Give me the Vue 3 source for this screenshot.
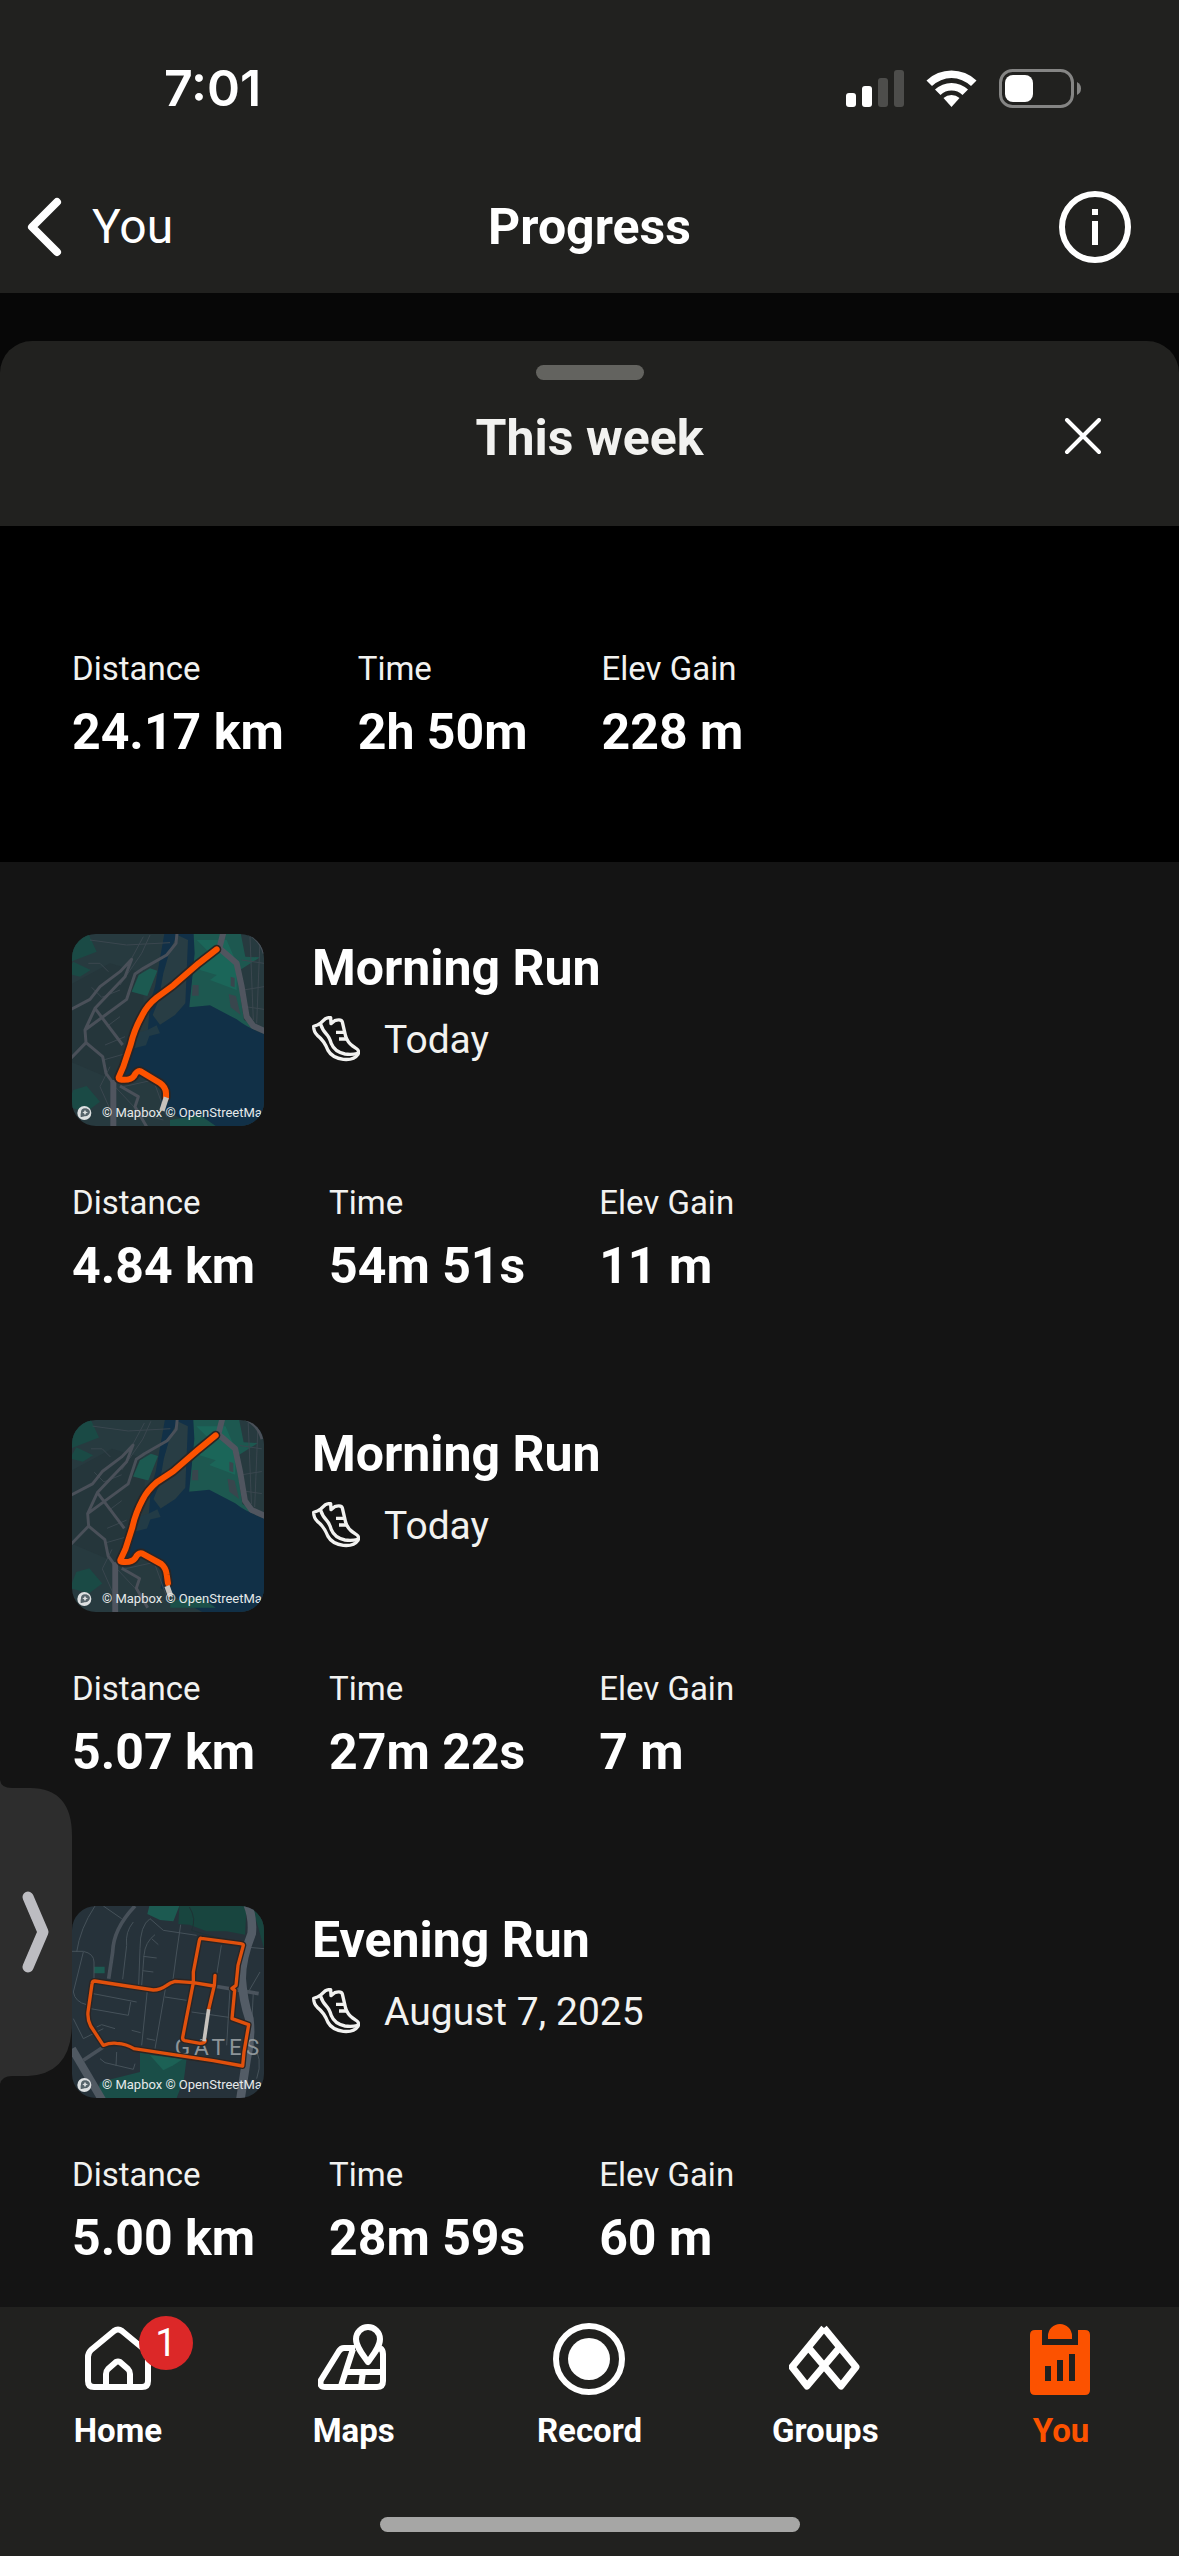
<script setup>
const summary = [
  { label: 'Distance', value: '24.17 km' },
  { label: 'Time', value: '2h 50m' },
  { label: 'Elev Gain', value: '228 m' }
]

const activities = [
  {
    id: 1,
    title: 'Morning Run',
    date: 'Today',
    map: 'lake',
    base: '',
    route: 'M470 88 L416 130 L340 196 L290 233 Q262 255 246 287 Q222 330 212 374 L190 440 L176 472 Q175 479 184 479 Q212 482 222 468 Q232 450 242 454 L300 489 Q318 502 318 520 V532',
    tail: 'M319 532 L306 572',
    stats: [
      { label: 'Distance', value: '4.84 km' },
      { label: 'Time', value: '54m 51s' },
      { label: 'Elev Gain', value: '11 m' }
    ]
  },
  {
    id: 2,
    title: 'Morning Run',
    date: 'Today',
    map: 'lake',
    base: 'translate(10 2) scale(.973)',
    route: 'M467 88 L416 130 L340 196 L290 229 Q262 253 248 281 Q226 322 217 364 L196 430 L181 462 Q180 468 190 468 Q216 470 226 456 Q234 439 246 442 L304 474 Q318 486 320 505 L324 532',
    tail: 'M321 540 L332 570',
    stats: [
      { label: 'Distance', value: '5.07 km' },
      { label: 'Time', value: '27m 22s' },
      { label: 'Elev Gain', value: '7 m' }
    ]
  },
  {
    id: 3,
    title: 'Evening Run',
    date: 'August 7, 2025',
    map: 'town',
    base: '',
    route: 'M465 250 L463 280 L446 352 M461 282 L400 272 L345 268 Q330 272 320 280 Q300 294 280 294 L200 282 L104 267 Q97 267 96 276 L84 360 Q82 384 92 402 L130 460 Q150 452 170 454 Q200 456 222 470 L340 488 L460 506 L548 522 L552 480 L566 398 L516 380 L524 295 L516 289 L528 280 L534 220 L550 160 Q550 156 542 155 L424 139 Q420 138 418 146 L400 240 L400 272 L368 436 Q367 444 374 446 L420 454 Q434 454 436 446',
    tail: 'M446 352 L432 448',
    stats: [
      { label: 'Distance', value: '5.00 km' },
      { label: 'Time', value: '28m 59s' },
      { label: 'Elev Gain', value: '60 m' }
    ]
  }
]

const tabs = [
  { id: 'home', label: 'Home', badge: 1 },
  { id: 'maps', label: 'Maps' },
  { id: 'record', label: 'Record' },
  { id: 'groups', label: 'Groups' },
  { id: 'you', label: 'You', active: true }
]
</script>

<template>
  <div class="app">
    <header class="top">
      <div class="status">
        <span class="clock">7:01</span>
        <svg class="status-icons" viewBox="846 66 236 42" aria-hidden="true">
          <g fill="#fff">
            <rect x="846" y="92" width="10" height="14" rx="3" />
            <rect x="862" y="85" width="10" height="21" rx="3" />
            <rect x="878" y="77" width="10" height="29" rx="3" fill="#4d4d4b" />
            <rect x="894" y="69" width="10" height="37" rx="3" fill="#4d4d4b" />
            <path d="M926.500 79.500 A36 36 0 0 1 976.500 79.500 L971 85 A28 28 0 0 0 932 85 Z" />
            <path d="M935 88.500 A24 24 0 0 1 968 88.500 L962.500 94 A16 16 0 0 0 940.500 94 Z" />
            <path d="M943.500 97 A12 12 0 0 1 959.500 97 L951.500 106 Z" />
            <rect x="1005" y="74" width="28" height="27" rx="8" />
          </g>
          <rect x="1000.500" y="69.500" width="72" height="36" rx="12" fill="none" stroke="#858584" stroke-width="3" />
          <path d="M1077 81 Q1081 83 1081 87.500 Q1081 92 1077 94 Z" fill="#858584" />
        </svg>
      </div>
      <nav class="nav">
        <a class="back" href="#you">
          <svg class="back-icon" viewBox="0 0 40 60" aria-hidden="true">
            <path d="M31 5 L6 30 L31 55" fill="none" stroke="#fff" stroke-width="8" stroke-linecap="round" stroke-linejoin="round" />
          </svg>
          You
        </a>
        <h1 class="title">Progress</h1>
        <button class="icon-button info" type="button" aria-label="Info">
          <svg class="icon" viewBox="0 0 72 72" aria-hidden="true">
            <circle cx="36" cy="36" r="33" fill="none" stroke="#fff" stroke-width="6" />
            <path d="M33 18h6v6h-6z M33 30h6v24h-6z" fill="#fff" />
          </svg>
        </button>
      </nav>
    </header>

    <main class="sheet">
      <div class="sheet-head">
        <span class="handle"></span>
        <div class="sheet-row">
          <h2 class="title sheet-title">This week</h2>
          <button class="icon-button close" type="button" aria-label="Close">
            <svg class="close-icon" viewBox="0 0 40 40" aria-hidden="true">
              <path d="M4 2 L36 34 M36 2 L4 34" stroke="#fff" stroke-width="4" stroke-linecap="round" />
            </svg>
          </button>
        </div>
      </div>

      <dl class="stats summary">
        <div v-for="s in summary" :key="s.label">
          <dt>{{ s.label }}</dt>
          <dd>{{ s.value }}</dd>
        </div>
      </dl>

      <div class="list">
        <article v-for="a in activities" :key="a.id" class="activity">
          <div class="activity-head">
            <div class="thumb">
              <svg viewBox="36 42 576 576" aria-hidden="true">
                <g v-if="a.map === 'lake'" :transform="a.base">
                  <rect x="20" y="30" width="620" height="610" fill="#273a3f" />
                  <path d="M20 200 L150 130 L250 160 L250 260 L200 400 L160 480 L20 420 Z" fill="#25363b" />
                  <path d="M20 30 H80 L110 95 L20 130 Z M40 125 L92 150 L60 170 L20 160 Z M40 510 L80 498 L120 545 L80 575 L20 560 Z" fill="#1a4a45" />
                  <path d="M215 215 L236 165 L270 145 L292 152 L262 228 Z" fill="#1c5a51" />
                  <path d="M400 30 H540 L556 110 L600 112 L540 150 L540 220 L552 300 L640 350 L560 320 L450 262 L385 262 L400 140 Z" fill="#1d5850" />
                  <path d="M410 60 L450 100 L420 120 L420 150 L470 165 L450 180 L530 210 L530 130 L500 60 Z" fill="#1b6659" />
                  <path d="M315 30 H400 L404 100 L388 262 L450 256 L530 298 Q570 330 640 352 V640 H440 L300 560 L310 500 L240 455 L180 470 L222 385 L262 352 L270 250 L285 200 Z" fill="#113047" />
                  <path d="M352 45 L384 60 L376 250 L345 285 L300 314 L278 285 L296 240 L310 160 L330 90 Z" fill="#283d44" />
                  <path d="M225 340 L262 330 L290 316 L300 340 L268 348 L258 376 L222 385 Z" fill="#223b46" />
                  <path d="M330 600 L420 585 L470 620 H330 Z" fill="#1b5049" />
                  <path d="M398 195 h18 v32 h-20 z M506 222 L528 228 L542 285 L512 262 Z M512 170 l12 4 v28 l-12 -4 z" fill="#38464d" />
                  <path d="M20 200 L20 540 M90 60 L200 75 L330 68 M85 130 H120 L145 155 M250 50 L215 115 M270 45 L245 100 L180 195 M95 202 L125 232 L180 210 M140 320 L180 290 M135 375 L195 350 M130 420 L200 400 M150 440 L120 500 L160 590 M165 500 L240 580 L310 600 M190 500 L280 480 L320 590 M570 50 L580 300 M600 60 L590 310 M545 120 L612 130 M550 210 L612 200 M556 260 L612 268" fill="none" stroke="#3b474f" stroke-width="3" />
                  <path d="M20 275 L90 238 L120 200 L180 155 L215 118 L195 170 L105 265 L188 375 M105 265 L75 330 L78 368 L20 428 M78 368 L128 410 L138 460 L160 490 M75 330 L200 238 L225 162 L250 145 L320 105 L348 70 L352 30 M180 498 L235 530 L225 560 L260 620" fill="none" stroke="#4a5059" stroke-width="9" stroke-linejoin="round" />
                  <path d="M492 30 L478 85 L530 130 L545 200 L560 290 L580 318 L640 345 M160 480 V640" fill="none" stroke="#50555f" stroke-width="18" stroke-linejoin="round" />
                  <path d="M540 30 Q600 50 612 100" fill="none" stroke="#4a5059" stroke-width="8" />
                </g>
                <g v-else>
                  <rect x="36" y="42" width="576" height="576" fill="#26323a" />
                  <path d="M268 42 H358 L340 88 L300 84 L262 66 Z M102 224 h32 v20 h-32 z" fill="#1c5a51" />
                  <path d="M358 42 H560 L555 128 L500 118 L440 118 L388 98 L355 96 Z M575 42 L612 90 V170 L596 110 Z" fill="#18453f" />
                  <path d="M120 570 L240 540 L240 480 L380 498 L372 560 L350 618 H110 Z" fill="#1a4e48" />
                  <path d="M270 490 L370 500 L340 520 L310 535 Z" fill="#1c6155" />
                  <path d="M105 42 Q60 110 50 180 M130 42 L185 80 M36 178 H70 Q102 185 102 210 V262 M70 180 L40 300 Q45 330 80 338 M220 90 Q195 120 200 160 L188 262 M270 80 Q240 100 240 170 L236 280 M270 80 L310 115 L410 130 M285 128 Q255 150 252 190 L245 280 M250 193 L290 198 M248 236 L280 240 M275 140 L295 158 M362 98 L350 180 L338 270 M484 160 L465 280 M555 165 L612 170 M318 280 L285 470 M262 295 L245 460 M100 305 L230 330 M92 350 L205 370 L212 330 M315 315 L380 325 M395 360 L520 378 M110 405 L125 398 L165 410 M215 415 L242 422 M510 290 L500 460 M260 440 L285 445 M40 380 L70 440 L130 410 M120 500 L135 512 L220 532 L225 515 M170 480 L168 522 M575 450 Q612 500 590 560 M600 240 L565 300 M580 300 L575 400" fill="none" stroke="#46525a" stroke-width="3" />
                  <path d="M225 42 Q160 110 158 180 L146 260 M70 505 L130 465" fill="none" stroke="#48515a" stroke-width="11" />
                  <path d="M462 282 L596 305" fill="none" stroke="#4a535c" stroke-width="11" />
                  <path d="M36 470 L130 630" fill="none" stroke="#505962" stroke-width="24" />
                  <path d="M560 30 Q580 75 575 125 Q545 200 545 260 Q550 330 568 380 Q575 440 560 500 L540 630" fill="none" stroke="#535c66" stroke-width="26" />
                  <path d="M388 45 Q410 80 395 115 Q440 130 530 150" fill="none" stroke="#1f3335" stroke-width="3" />
                  <text class="place" x="344" y="489">GATES</text>
                </g>
                <g fill="none" stroke-linejoin="round" stroke-linecap="round">
                  <path :d="a.route" stroke="#2b2524" :stroke-width="a.map === 'lake' ? 28 : 18" />
                  <path :d="a.route" :stroke="a.map === 'lake' ? '#fc5200' : '#e0500c'" :stroke-width="a.map === 'lake' ? 18 : 10" />
                  <path :d="a.tail" stroke="#c6c2bd" :stroke-width="a.map === 'lake' ? 16 : 11" stroke-linecap="butt" />
                </g>
                <circle cx="73" cy="579" r="21" fill="#dde0e1" />
                <circle cx="75" cy="577" r="12" fill="#56646a" />
                <path d="M62 591 Q60 570 74 568 A10 10 0 1 1 78 586 Q70 592 62 591 Z" fill="#56646a" />
                <path d="M75 569 L78 575 L84 577 L78 580 L75 586 L72 580 L67 577 L72 575 Z" fill="#dde0e1" />
              </svg>
              <span class="credit">© Mapbox © OpenStreetMa</span>
            </div>
            <div class="activity-text">
              <h3 class="title">{{ a.title }}</h3>
              <p class="date">
                <svg class="shoe" viewBox="36 279 144 144" aria-hidden="true">
                  <g fill="none" stroke="#f2f2f0" stroke-width="10" stroke-linejoin="round">
                    <path d="M41 310 Q54 307 62 300 L76 287 Q84 283 92 284 L93 302 L104 293 Q124 287 127 297 L137 340 Q143 359 158 369 L171 378 Q178 383 174 394 Q162 412 130 409 Q96 404 84 382 Q72 352 52 337 Q41 327 41 310 Z" />
                    <path d="M61 302 Q68 322 79 333 Q88 342 94 362 Q104 387 135 393 Q156 396 174 391" />
                    <path d="M108 328 H132 M117 348 H139" />
                  </g>
                </svg>
                {{ a.date }}
              </p>
            </div>
          </div>
          <dl class="stats">
            <div v-for="s in a.stats" :key="s.label">
              <dt>{{ s.label }}</dt>
              <dd>{{ s.value }}</dd>
            </div>
          </dl>
        </article>
      </div>
    </main>

    <button class="drawer" type="button" aria-label="Open drawer">
      <svg viewBox="0 0 72 304" aria-hidden="true">
        <path d="M0 0 Q1 8 12 8 H30 Q72 8 72 56 V242 Q72 294 28 296 H12 Q2 296 0 304 Z" fill="#2d2d2d" />
        <path d="M28 117 L43 152 L28 187" fill="none" stroke="#bcbcc1" stroke-width="11" stroke-linecap="round" stroke-linejoin="round" />
      </svg>
    </button>

    <footer class="bottom">
      <nav class="tabs">
        <a v-for="t in tabs" :key="t.id" class="tab" :class="{ active: t.active }" :href="'#' + t.id">
          <span class="tab-icon">
            <svg class="icon" viewBox="0 0 72 72" aria-hidden="true" fill="none" stroke="currentColor" stroke-width="6" stroke-linejoin="round">
              <template v-if="t.id === 'home'">
                <path d="M12 64 Q6 64 6 58 V34 Q6 30 9 27 L32 8 Q36 5 40 8 L63 27 Q66 30 66 34 V58 Q66 64 60 64 Z" />
                <path d="M24 64 V51 Q24 48 26 46 L34 39 Q36 38 38 39 L46 46 Q48 48 48 51 V64" />
              </template>
              <template v-else-if="t.id === 'maps'">
                <path d="M37 25 H26 Q23 25 21 28 L3 57 Q1 64 7 64 H59 Q65 64 65 58 V31 Q65 27 62 25" />
                <path d="M35 26 L23 63 M28 49 H65 M45 49 L43 64" />
                <path d="M50 39 C45 32 38 24 38 16 A12 12 0 0 1 62 16 C62 24 55 32 50 39 Z" />
              </template>
              <template v-else-if="t.id === 'record'">
                <circle cx="36" cy="36" r="33" />
                <circle cx="36" cy="36" r="21" fill="currentColor" stroke="none" />
              </template>
              <path v-else-if="t.id === 'groups'" stroke-width="7" d="M35 5 L3 44 L18 63 L51 24 M35 5 L67 44 L52 63 L19 24" />
              <path v-else stroke="none" fill="currentColor" fill-rule="evenodd" d="M10 7 H17 V22 H53 V7 H60 Q65 7 65 12 V67 Q65 72 60 72 H10 Q5 72 5 67 V12 Q5 7 10 7 Z M20 43 V58 H26 V43 Z M32 37 V58 H38 V37 Z M44 31 V58 H50 V31 Z M23 16 V13 A12 12 0 0 1 47 13 V16 Z" />
            </svg>
            <span v-if="t.badge" class="badge">{{ t.badge }}</span>
          </span>
          <span class="tab-label">{{ t.label }}</span>
        </a>
      </nav>
      <span class="home-bar"></span>
    </footer>
  </div>
</template>

<style>
body {
  margin: 0;
  background: #070707;
}
</style>

<style scoped>
.app {
  position: relative;
  display: flex;
  flex-direction: column;
  height: 100vh;
  overflow: hidden;
  background: #070707;
  color: #fff;
  font-family: Roboto, "Liberation Sans", sans-serif;
}
h1, h2, h3, p, dl, dd {
  margin: 0;
}
svg {
  display: block;
}
a {
  color: inherit;
  text-decoration: none;
}
button {
  padding: 0;
  border: 0;
  background: none;
  cursor: pointer;
}
.title {
  font-size: 50px;
  line-height: 60px;
  font-weight: 700;
}
.icon {
  width: 72px;
  height: 72px;
}

.top {
  background: #21211f;
}
.status {
  display: flex;
  align-items: center;
  justify-content: space-between;
  height: 176px;
  padding: 0 97px 0 164px;
}
.clock {
  font: 600 50px/60px Inter, sans-serif;
}
.status-icons {
  width: 236px;
  height: 42px;
}
.nav {
  display: grid;
  grid-template-columns: 1fr auto 1fr;
  align-items: center;
  height: 102px;
  padding: 0 26px 15px;
}
.back {
  display: flex;
  align-items: center;
  gap: 26px;
  font-size: 48px;
  line-height: 60px;
}
.back-icon {
  width: 40px;
  height: 60px;
}
.icon-button {
  justify-self: end;
}
.info {
  margin-right: 22px;
}

.sheet {
  display: flex;
  flex: 1;
  flex-direction: column;
  min-height: 0;
  margin-top: 48px;
}
.sheet-head {
  padding: 24px 76px 58px;
  border-radius: 32px 32px 0 0;
  background: #21211f;
}
.handle {
  display: block;
  width: 108px;
  height: 15px;
  margin: 0 auto 28px;
  border-radius: 8px;
  background: #63635f;
}
.sheet-row {
  display: grid;
  grid-template-columns: 1fr auto 1fr;
  align-items: center;
}
.sheet-title {
  grid-column: 2;
  color: #f2f2f0;
}
.close-icon {
  width: 40px;
  height: 40px;
}

.stats {
  display: flex;
  gap: 74px;
}
.stats dt {
  color: #f2f2f0;
  font-size: 33px;
  line-height: 40px;
}
.stats dd {
  margin-top: 13px;
  font-size: 50px;
  line-height: 60px;
  font-weight: 700;
}
.summary {
  padding: 123px 72px 100px;
  background: #000;
}

.list {
  flex: 1;
  min-height: 0;
  overflow: hidden;
  background: #141414;
}
.activity {
  padding: 72px 72px 52px;
}
.activity-head {
  display: flex;
  gap: 48px;
  margin-bottom: 57px;
}
.thumb {
  position: relative;
  flex: none;
  width: 192px;
  height: 192px;
  border-radius: 24px;
  overflow: hidden;
}
.credit {
  position: absolute;
  left: 30px;
  bottom: 5px;
  color: #e6e9ea;
  font-size: 13px;
  line-height: 16px;
  white-space: nowrap;
}
.place {
  fill: #8d9498;
  font-family: Roboto, sans-serif;
  font-size: 68px;
  letter-spacing: 12px;
}
.activity-text {
  padding-top: 4px;
}
.date {
  display: flex;
  align-items: center;
  gap: 24px;
  margin-top: 18px;
  color: #f2f2f0;
  font-size: 39px;
  line-height: 48px;
}
.shoe {
  width: 48px;
  height: 48px;
}

.drawer {
  position: absolute;
  left: 0;
  bottom: 472px;
  width: 72px;
  height: 304px;
}

.bottom {
  padding: 16px 0 24px;
  background: #21211f;
}
.tabs {
  display: flex;
}
.tab {
  display: flex;
  flex: 1;
  flex-direction: column;
  align-items: center;
  gap: 16px;
}
.tab.active {
  color: #fc5200;
}
.tab-icon {
  position: relative;
}
.badge {
  position: absolute;
  top: -7px;
  left: 57px;
  width: 54px;
  height: 54px;
  border-radius: 50%;
  background: #dc2828;
  color: #fff;
  font-size: 38px;
  line-height: 54px;
  text-align: center;
}
.tab-label {
  font-size: 33px;
  line-height: 40px;
  font-weight: 700;
}
.home-bar {
  display: block;
  width: 420px;
  height: 15px;
  margin: 66px auto 0;
  border-radius: 8px;
  background: #a6a6a5;
}
</style>
